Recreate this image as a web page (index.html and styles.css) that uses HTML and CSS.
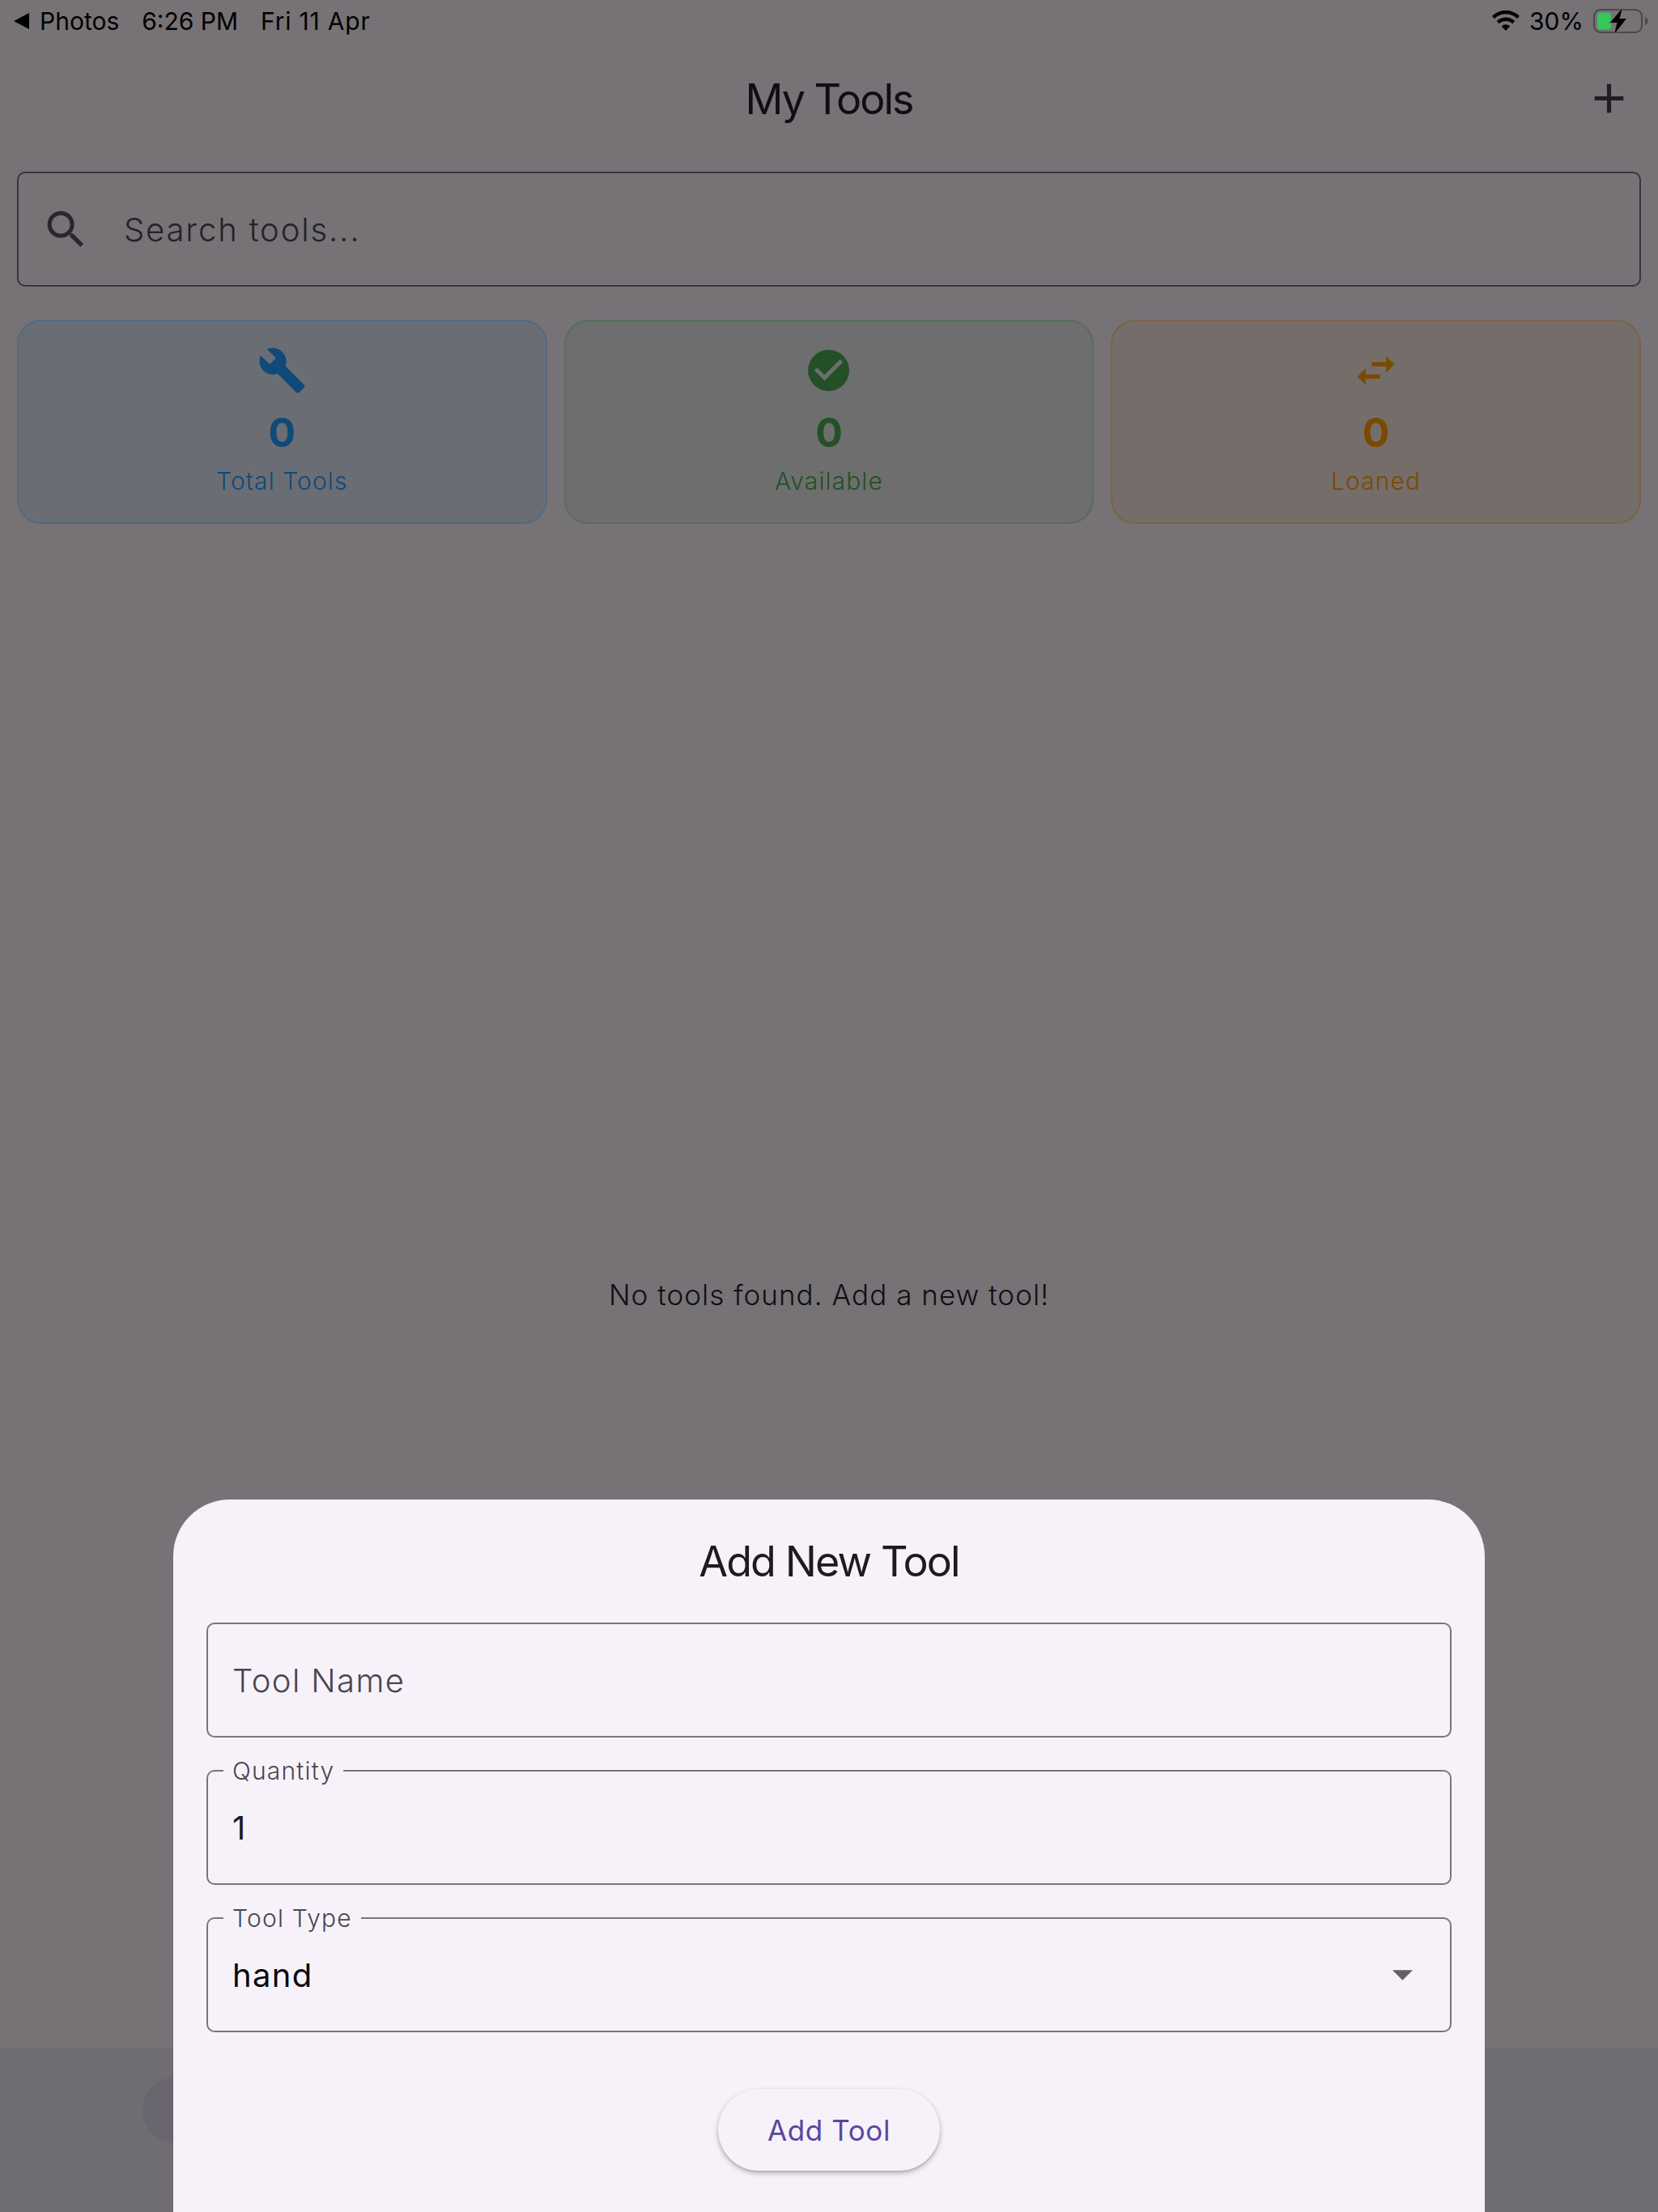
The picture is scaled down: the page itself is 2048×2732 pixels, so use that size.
FILE: index.html
```html
<!DOCTYPE html>
<html lang="en">
<head>
  <meta charset="UTF-8" />
  <title>My Tools</title>
  <link rel="stylesheet" href="styles.css">
</head>
<body>
  <div class="screen">
    <div class="status-bar">
      <div class="status-left">
        <svg class="back-icon" viewBox="0 0 20 20"><path d="M19 0v20L0 10z" /></svg>
        <span class="status-app">Photos</span>
        <span class="status-time">6:26 PM</span>
        <span class="status-date">Fri 11 Apr</span>
      </div>
      <div class="status-right">
        <svg class="wifi-icon" viewBox="0 0 34 25">
          <path d="M17 25l-5.2-5.6a7.4 7.4 0 0 1 10.4 0z" />
          <path d="M8.8 16.2l-3-3.2a16 16 0 0 1 22.4 0l-3 3.2a11.8 11.8 0 0 0-16.4 0z" />
          <path d="M3 10L0 6.7a24.6 24.6 0 0 1 34 0L31 10a20.2 20.2 0 0 0-28 0z" />
        </svg>
        <span class="status-battery-text">30%</span>
        <svg class="battery-icon" viewBox="0 0 68 32">
          <rect x="1" y="2" width="59" height="28" rx="8" fill="none" stroke="#4a484b" stroke-width="2" />
          <path d="M64 11c2 .6 3.500 2.500 3.500 5s-1.500 4.400-3.500 5z" fill="#4a484b" />
          <rect x="5" y="5.500" width="17" height="21" rx="4" fill="#34c759" />
          <path d="M36 0L21 18h8.500L26 32 41 13h-8.500z" stroke="#767276" stroke-width="2" paint-order="stroke" />
        </svg>
      </div>
    </div>

    <header class="app-bar">
      <h1 class="app-title">My Tools</h1>
      <svg class="add-icon" viewBox="0 0 24 24"><path d="M19 13h-6v6h-2v-6H5v-2h6V5h2v6h6v2z" /></svg>
    </header>

    <div class="search-box">
      <svg class="search-icon" viewBox="0 0 24 24"><path d="M15.5 14h-.79l-.28-.27C15.41 12.59 16 11.11 16 9.5 16 5.91 13.09 3 9.500 3S3 5.910 3 9.500 5.910 16 9.500 16c1.610 0 3.090-.59 4.230-1.570l.27.28v.79l5 4.990L20.490 19l-4.990-5zm-6 0C7.010 14 5 11.990 5 9.500S7.010 5 9.500 5 14 7.010 14 9.500 11.990 14 9.500 14z" /></svg>
      <span class="search-text">Search tools...</span>
    </div>

    <div class="stats">
      <div class="stat-card stat-blue">
        <svg class="stat-icon" viewBox="0 0 24 24"><path d="M22.700 19l-9.100-9.100c.9-2.300.4-5-1.500-6.900-2-2-5-2.400-7.400-1.300L9 6 6 9 1.600 4.700C.4 7.100.9 10.100 2.900 12.100c1.900 1.900 4.600 2.400 6.900 1.500l9.100 9.100c.4.4 1 .4 1.400 0l2.300-2.300c.5-.4.5-1.100.1-1.400z" /></svg>
        <div class="stat-value">0</div>
        <div class="stat-label">Total Tools</div>
      </div>
      <div class="stat-card stat-green">
        <svg class="stat-icon" viewBox="0 0 24 24"><path d="M12 2C6.480 2 2 6.480 2 12s4.480 10 10 10 10-4.480 10-10S17.520 2 12 2zm-2 15l-5-5 1.410-1.410L10 14.170l7.590-7.590L19 8l-9 9z" /></svg>
        <div class="stat-value">0</div>
        <div class="stat-label">Available</div>
      </div>
      <div class="stat-card stat-orange">
        <svg class="stat-icon" viewBox="0 0 24 24"><path d="M6.990 11L3 15l3.990 4v-3H14v-2H6.990v-3zM21 9l-3.990-4v3H10v2h7.010v3L21 9z" /></svg>
        <div class="stat-value">0</div>
        <div class="stat-label">Loaned</div>
      </div>
    </div>

    <div class="empty-state">No tools found. Add a new tool!</div>

    <nav class="nav-bar">
      <div class="nav-indicator"></div>
    </nav>

    <div class="sheet">
      <h2 class="sheet-title">Add New Tool</h2>
      <div class="field"><span class="field-hint">Tool Name</span></div>
      <div class="field">
        <label class="field-label">Quantity</label>
        <span class="field-value">1</span>
      </div>
      <div class="field field-select">
        <label class="field-label">Tool Type</label>
        <span class="field-value field-value-dark">hand</span>
        <svg class="drop-icon" viewBox="7 10 10 5"><path d="M7 10l5 5 5-5z" /></svg>
      </div>
      <div class="sheet-actions">
        <button class="add-btn">Add Tool</button>
      </div>
    </div>
  </div>
</body>
</html>
```

FILE: styles.css
```css
* {
  box-sizing: border-box;
}
body {
  margin: 0;
  font-family: 'Inter', 'Liberation Sans', sans-serif;
}
.screen {
  width: 2048px;
  height: 2732px;
  background: #767276;
  color: #100e12;
  position: relative;
  overflow: hidden;
  display: flex;
  flex-direction: column;
}

/* status bar */
.status-bar {
  height: 51px;
  padding: 0 12px 0 17px;
  display: flex;
  justify-content: space-between;
  align-items: center;
  color: #000;
  font-size: 30px;
  line-height: 50px;
}
.status-left {
  display: flex;
  align-items: center;
}
.back-icon {
  width: 20px;
  height: 20px;
  margin-right: 12px;
}
.status-app {
  margin-right: 28px;
}
.status-time {
  margin-right: 28px;
}
.status-date {
  letter-spacing: 0.800px;
}
.status-right {
  display: flex;
  align-items: center;
}
.wifi-icon {
  width: 34px;
  height: 25px;
  margin-right: 12px;
}
.status-battery-text {
  margin-right: 12px;
}
.battery-icon {
  width: 68px;
  height: 32px;
}

/* app bar */
.app-bar {
  height: 141px;
  padding-top: 2px;
  display: flex;
  justify-content: center;
  align-items: center;
  position: relative;
}
.app-title {
  margin: 0;
  font-size: 52px;
  font-weight: 400;
  letter-spacing: -2px;
}
.add-icon {
  position: absolute;
  right: 30px;
  top: 40px;
  width: 61px;
  height: 61px;
  fill: #1f1d22;
}

/* search */
.search-box {
  height: 142px;
  margin: 20px 21px 0;
  padding-left: 28px;
  border: 2.500px solid #38363b;
  border-radius: 10px;
  display: flex;
  align-items: center;
}
.search-icon {
  width: 61px;
  height: 61px;
  fill: #29272c;
}
.search-text {
  margin-left: 41px;
  font-size: 40px;
  font-weight: 300;
  letter-spacing: 1.850px;
  color: #242227;
}

/* stat cards */
.stats {
  margin: 41px 21px 0;
  display: grid;
  grid-template-columns: repeat(3, 1fr);
  gap: 21px;
}
.stat-card {
  height: 252px;
  padding-top: 30px;
  border-width: 2.500px;
  border-style: solid;
  border-radius: 30px;
  display: flex;
  flex-direction: column;
  align-items: center;
}
.stat-icon {
  width: 61px;
  height: 61px;
  fill: currentColor;
}
.stat-value {
  margin-top: 16px;
  font-size: 50px;
  font-weight: 700;
  line-height: 61px;
}
.stat-label {
  margin-top: 9px;
  font-size: 30px;
  font-weight: 300;
  letter-spacing: 1.100px;
  line-height: 40px;
}
.stat-blue {
  background: #6b6d75;
  border-color: #506a84;
  color: #0f4a78;
}
.stat-green {
  background: #6d6e6d;
  border-color: #566f5a;
  color: #235026;
}
.stat-orange {
  background: #756d6a;
  border-color: #7a6247;
  color: #7a4a00;
}

.empty-state {
  flex: 1;
  padding-top: 22px;
  display: flex;
  justify-content: center;
  align-items: center;
  font-size: 35px;
  font-weight: 300;
  letter-spacing: 1.050px;
}

/* nav bar behind the sheet */
.nav-bar {
  height: 203px;
  background: #706d72;
  padding: 36px 0 0 176px;
}
.nav-indicator {
  width: 160px;
  height: 82px;
  border-radius: 41px;
  background: #69666f;
}

/* bottom sheet */
.sheet {
  position: absolute;
  left: 214px;
  right: 214px;
  top: 1852px;
  bottom: 0;
  padding: 41px 41px 0 41px;
  background: #f7f2fa;
  border-radius: 70px 70px 0 0;
  color: #1d1b20;
}
.sheet-title {
  margin: 0 0 39px;
  height: 72px;
  line-height: 72px;
  text-align: center;
  font-size: 52px;
  font-weight: 400;
  letter-spacing: -1.900px;
}
.field {
  height: 142px;
  margin-bottom: 40px;
  padding: 0 30px;
  border: 2.500px solid #79747e;
  border-radius: 10px;
  display: flex;
  align-items: center;
  justify-content: space-between;
  position: relative;
}
.field-label {
  position: absolute;
  left: 19px;
  top: -19px;
  padding: 0 11px;
  background: #f7f2fa;
  color: #49454f;
  font-size: 30px;
  font-weight: 300;
  line-height: 36px;
  letter-spacing: 1.200px;
}
.field-hint {
  font-size: 40px;
  font-weight: 300;
  letter-spacing: 1.400px;
  color: #49454f;
}
.field-value {
  font-size: 40px;
  letter-spacing: 1.300px;
  color: #1d1b20;
}
.field-value-dark {
  color: #0b0a0d;
}
.drop-icon {
  width: 25px;
  height: 13px;
  margin-right: 16px;
  fill: #616161;
}
.sheet-actions {
  margin-top: 70px;
  display: flex;
  justify-content: center;
}
.add-btn {
  width: 274px;
  height: 101px;
  border: none;
  border-radius: 51px;
  background: #f7f2fa;
  box-shadow: 0 3px 6px rgba(0, 0, 0, 0.28), 0 1px 2px rgba(0, 0, 0, 0.12);
  color: #5b46a0;
  font-family: inherit;
  font-size: 35px;
  font-weight: 400;
  letter-spacing: 0.600px;
}
```
